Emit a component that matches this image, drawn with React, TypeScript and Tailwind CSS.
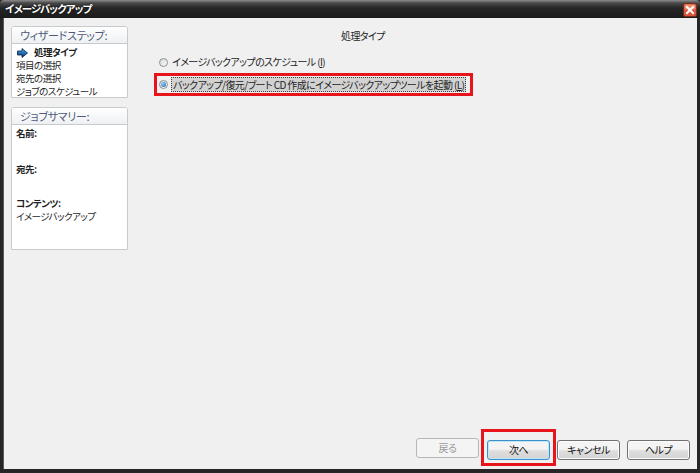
import React from 'react';

const jp = "font-['Noto_Sans_CJK_JP','Noto_Sans',sans-serif] [font-feature-settings:'palt']";

const StepArrow: React.FC = () => (
  <svg width="11" height="10" viewBox="0 0 11 10" className="shrink-0">
    <defs>
      <linearGradient id="arr" x1="0" y1="0" x2="0" y2="1">
        <stop offset="0" stopColor="#3fb8f0" />
        <stop offset="1" stopColor="#0b2a6e" />
      </linearGradient>
    </defs>
    <path d="M0.5 3 H5 V0.5 L10.5 5 L5 9.5 V7 H0.5 Z" fill="url(#arr)" stroke="#0a1e52" strokeWidth="0.8" />
  </svg>
);

const CloseBtn: React.FC = () => (
  <svg width="14" height="14" viewBox="0 0 14 14" className="mr-[3px] mt-[3px] shrink-0">
    <rect x="0.5" y="0.5" width="13" height="13" rx="2" fill="#d9553a" stroke="#7a2c1a" />
    <rect x="1.5" y="1.5" width="11" height="5" rx="1" fill="#ec8a6c" />
    <path d="M4 4 L10 10 M10 4 L4 10" stroke="#ffffff" strokeWidth="2" strokeLinecap="square" />
  </svg>
);

const Radio: React.FC<{ checked?: boolean }> = ({ checked }) => (
  <span className="relative flex h-[9px] w-[9px] shrink-0 items-center justify-center rounded-full border border-[#8e8f8f] bg-[linear-gradient(135deg,#d8d8d8,#fbfbfb)]">
    {checked && <span className="h-[5px] w-[5px] rounded-full bg-[radial-gradient(circle_at_35%_35%,#8fd2ff,#1a5fa8)]" />}
  </span>
);

const Panel: React.FC<{ title: string; className: string; children: React.ReactNode }> = ({ title, className, children }) => (
  <div className={`flex flex-col overflow-hidden rounded-t-[3px] border border-[#c8cbce] bg-white ${className}`}>
    <div className="h-[17px] shrink-0 border-b border-[#c8cbce] bg-[linear-gradient(#ffffff,#eef0f2)] pl-[8px] text-[11px] leading-[16px] tracking-[-0.3px] text-[#4e5b78]">
      {title}
    </div>
    <div className="flex flex-col px-[4px] text-[9.5px] leading-[13px] tracking-[-0.5px] text-[#1e1e1e]">{children}</div>
  </div>
);

const Btn: React.FC<{ label: string; disabled?: boolean; focus?: boolean }> = ({ label, disabled, focus }) => (
  <button
    className={`h-[20px] w-[63px] rounded-[3px] border text-[10px] leading-[18px] tracking-[-0.5px] ${
      disabled
        ? 'border-[#b5b8bb] bg-[#f4f4f4] text-[#9a9a9a]'
        : focus
          ? 'border-[#3c8fc8] bg-[linear-gradient(#f4f4f4_45%,#dedede_55%,#d4d4d4)] text-[#111] shadow-[inset_0_0_0_1px_#bfe6f7]'
          : 'border-[#707070] bg-[linear-gradient(#f4f4f4_45%,#dedede_55%,#d4d4d4)] text-[#111] shadow-[inset_0_0_0_1px_#fcfcfc]'
    }`}
  >
    {label}
  </button>
);

const App: React.FC = () => {
  return (
    <div className={`flex h-[473px] w-[700px] flex-col bg-[#262626] ${jp}`}>
      {/* title bar */}
      <div className="flex h-[18px] w-full shrink-0 flex-row items-start rounded-t-[4px] bg-[linear-gradient(#8d8d8d,#4a4a4a_3px,#262626_8px,#1c1c1c)]">
        <span className="flex-1 pl-[5px] pt-[2px] text-[10.5px] font-bold leading-[14px] tracking-[-0.9px] text-white [text-shadow:0_0_2px_#000]">
          イメージバックアップ
        </span>
        <CloseBtn />
      </div>

      {/* client area */}
      <div className="mx-[3px] mb-[4px] flex flex-1 flex-col border-l border-[#5a5a5a] bg-[#f0f0f0]">
        <div className="flex flex-1">
          {/* left wizard column */}
          <div className="flex w-[124px] shrink-0 flex-col pl-[7px] pt-[8px]">
            <Panel title="ウィザードステップ:" className="h-[72px]">
              <div className="flex items-center gap-[6px] pl-[1px] pt-[2px] font-bold">
                <StepArrow />
                <span>処理タイプ</span>
              </div>
              <div>項目の選択</div>
              <div>宛先の選択</div>
              <div>ジョブのスケジュール</div>
            </Panel>
            <Panel title="ジョブサマリー:" className="mt-[9px] h-[143px]">
              <div className="pt-[2px] font-bold">名前:</div>
              <div className="pt-[23px] font-bold">宛先:</div>
              <div className="pt-[21px] font-bold">コンテンツ:</div>
              <div>イメージバックアップ</div>
            </Panel>
          </div>

          {/* main */}
          <div className="flex flex-1 flex-col text-[10px] leading-[14px] tracking-[-0.6px] text-[#1e1e1e]">
            <div className="ml-[213px] pt-[11px]">処理タイプ</div>
            <div className="ml-[31px] mt-[12px] flex items-center gap-[4px]">
              <Radio />
              <span>
                イメージバックアップのスケジュール (<span className="underline">I</span>)
              </span>
            </div>
            <div className="ml-[26px] mt-[4px] flex self-start items-center gap-[3px] border-[3px] border-[#e8141c] py-[1px] pl-[2px] pr-[4px]">
              <Radio checked />
              <span className="border border-dotted border-[#444] bg-[#d2d2d2] px-[1px] leading-[13px]">
                バックアップ/復元/ブート CD 作成にイメージバックアップツールを起動 (<span className="underline">L</span>)
              </span>
            </div>
          </div>
        </div>

        {/* button row */}
        <div className="flex items-center justify-end pb-[3px] pr-[7px]">
          <Btn label="戻る" disabled />
          <div className="ml-[2px] border-[3px] border-[#e8141c] p-[3px]">
            <Btn label="次へ" focus />
          </div>
          <div className="ml-[1px]">
            <Btn label="キャンセル" />
          </div>
          <div className="ml-[7px]">
            <Btn label="ヘルプ" />
          </div>
        </div>
      </div>
    </div>
  );
};

export default App;
